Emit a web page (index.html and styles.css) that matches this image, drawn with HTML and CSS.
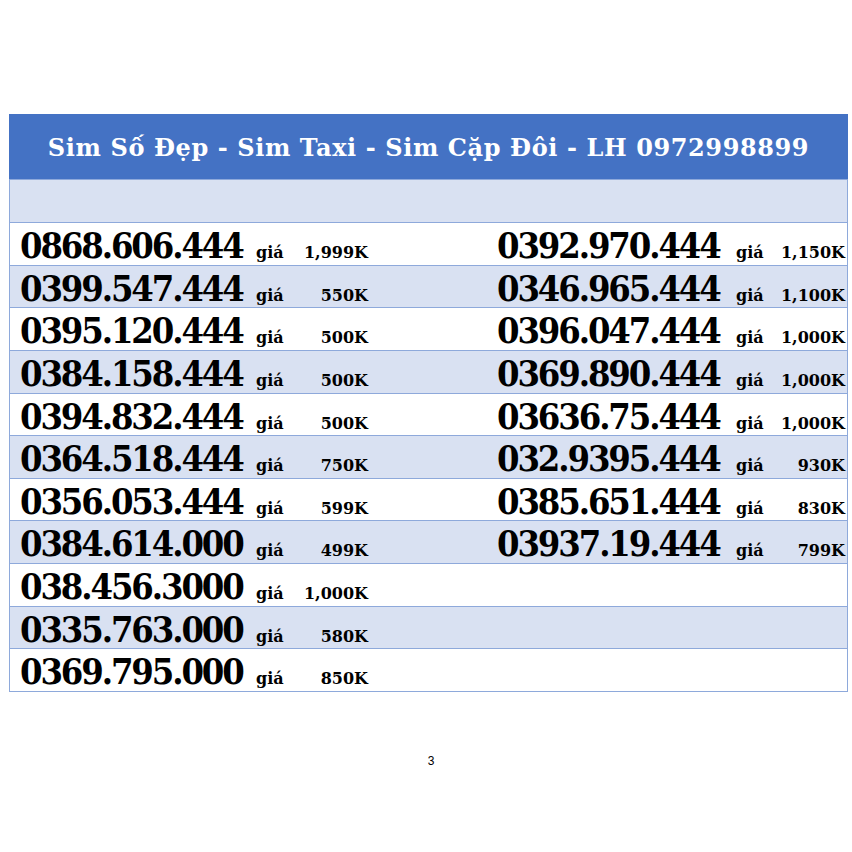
FILE: index.html
```html
<!DOCTYPE html>
<html lang="vi">
<head>
<meta charset="utf-8">
<title>Sim Số Đẹp</title>
<link rel="stylesheet" href="styles.css">
</head>
<body>
<div class="page">
  <div class="sheet">
    <div class="head">Sim Số Đẹp - Sim Taxi - Sim Cặp Đôi - LH 0972998899</div>
    <div class="row blank shade"></div>
    <div class="row">
      <span class="num">0868.606.444</span><span class="gia">giá</span><span class="price">1,999K</span>
      <span class="num r">0392.970.444</span><span class="gia r">giá</span><span class="price r">1,150K</span>
    </div>
    <div class="row shade">
      <span class="num">0399.547.444</span><span class="gia">giá</span><span class="price">550K</span>
      <span class="num r">0346.965.444</span><span class="gia r">giá</span><span class="price r">1,100K</span>
    </div>
    <div class="row">
      <span class="num">0395.120.444</span><span class="gia">giá</span><span class="price">500K</span>
      <span class="num r">0396.047.444</span><span class="gia r">giá</span><span class="price r">1,000K</span>
    </div>
    <div class="row shade">
      <span class="num">0384.158.444</span><span class="gia">giá</span><span class="price">500K</span>
      <span class="num r">0369.890.444</span><span class="gia r">giá</span><span class="price r">1,000K</span>
    </div>
    <div class="row">
      <span class="num">0394.832.444</span><span class="gia">giá</span><span class="price">500K</span>
      <span class="num r">03636.75.444</span><span class="gia r">giá</span><span class="price r">1,000K</span>
    </div>
    <div class="row shade">
      <span class="num">0364.518.444</span><span class="gia">giá</span><span class="price">750K</span>
      <span class="num r">032.9395.444</span><span class="gia r">giá</span><span class="price r">930K</span>
    </div>
    <div class="row">
      <span class="num">0356.053.444</span><span class="gia">giá</span><span class="price">599K</span>
      <span class="num r">0385.651.444</span><span class="gia r">giá</span><span class="price r">830K</span>
    </div>
    <div class="row shade">
      <span class="num">0384.614.000</span><span class="gia">giá</span><span class="price">499K</span>
      <span class="num r">03937.19.444</span><span class="gia r">giá</span><span class="price r">799K</span>
    </div>
    <div class="row">
      <span class="num">038.456.3000</span><span class="gia">giá</span><span class="price">1,000K</span>
    </div>
    <div class="row shade">
      <span class="num">0335.763.000</span><span class="gia">giá</span><span class="price">580K</span>
    </div>
    <div class="row last">
      <span class="num">0369.795.000</span><span class="gia">giá</span><span class="price">850K</span>
    </div>
  </div>
  <div class="pageno">3</div>
</div>
</body>
</html>
```

FILE: styles.css
```css
html, body {
  margin: 0;
  padding: 0;
  background: #ffffff;
}

.page {
  width: 852px;
  height: 852px;
  padding-top: 114px;
  box-sizing: border-box;
}

.sheet {
  margin-left: 9px;
  width: 839px;
  border-left: 1px solid #8ea9db;
  border-right: 1px solid #8ea9db;
  box-sizing: border-box;
}

.head {
  height: 66px;
  margin: 0 -1px;
  background: #4472c4;
  color: #ffffff;
  font-family: "DejaVu Serif", "Liberation Serif", serif;
  font-weight: bold;
  font-size: 24px;
  letter-spacing: 0.6px;
  display: flex;
  align-items: center;
  justify-content: center;
  padding-top: 2px;
  box-sizing: border-box;
  border-bottom: 1px solid #8ea9db;
}

.row {
  height: 42.64px;
  box-sizing: border-box;
  border-bottom: 1px solid #8ea9db;
  display: grid;
  grid-template-columns: 236px 44px 81px 116px 240px 48px 72px;
  align-items: baseline;
  padding-top: 2px;
  white-space: nowrap;
  color: #000000;
  font-family: "DejaVu Serif", "Liberation Serif", serif;
  font-weight: bold;
}

.row.blank {
  height: 43px;
}

.shade {
  background: #d9e1f2;
}

.num {
  grid-column: 1;
  font-size: 36px;
  font-stretch: condensed;
  letter-spacing: -2.1px;
  line-height: 40px;
  padding-left: 10px;
}

.gia {
  grid-column: 2;
  font-size: 16px;
  padding-left: 10px;
}

.price {
  grid-column: 3;
  font-size: 16px;
  text-align: right;
  padding-right: 3px;
}

.num.r {
  grid-column: 5;
}

.gia.r {
  grid-column: 6;
  padding-left: 9px;
}

.price.r {
  grid-column: 7;
  padding-right: 2px;
}

.pageno {
  margin-top: 62px;
  padding-left: 10px;
  text-align: center;
  font-family: "Liberation Sans", Arial, sans-serif;
  font-size: 12px;
  color: #000000;
}
```
